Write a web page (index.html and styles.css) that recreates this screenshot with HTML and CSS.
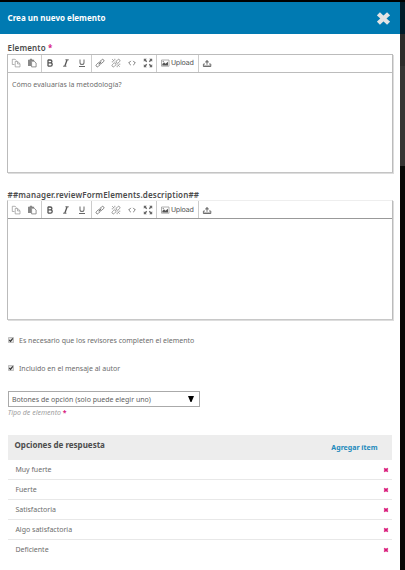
FILE: index.html
```html
<!DOCTYPE html>
<html lang="es">
<head>
<meta charset="utf-8">
<title>Crea un nuevo elemento</title>
<link rel="stylesheet" href="styles.css">
</head>
<body>
<svg class="sprite" aria-hidden="true">
  <symbol id="copy" viewBox="0 0 10 10"><path d="M3.5 6.5h-2.2v-5.2h2.7l1.6 1.4M4.2 3.5h2.5l2.3 2.2v3.2h-4.8zM6.5 3.6v2.3h2.3" fill="none" stroke="#929292" stroke-width=".7"/></symbol>
  <symbol id="paste" viewBox="0 0 10 10"><path d="M1 1.7h1.6l.4-.9h2l.4.9h1.7v1.2h-2.8v5h-3.3z" fill="#888"/><path d="M4.6 3.2h2.5l2 1.8v3.9h-4.5z" fill="#fff" stroke="#777" stroke-width=".8"/></symbol>
  <symbol id="bold" viewBox="0 0 10 10"><path d="M3 1.8v6.5M3 2h2.3q1.6 0 1.6 1.4t-1.6 1.5H3h2.5q1.7 0 1.7 1.6T5.5 8.1H3" fill="none" stroke="#555" stroke-width="1.3"/></symbol>
  <symbol id="italic" viewBox="0 0 10 10"><path d="M4.3 1.8h3.5M2 8.2h3.5" stroke="#666" stroke-width=".9"/><path d="M6.1 1.8L3.8 8.2" stroke="#555" stroke-width="1.3"/></symbol>
  <symbol id="underline" viewBox="0 0 10 10"><path d="M3 1.5v3q0 2 2 2t2-2v-3" fill="none" stroke="#777" stroke-width="1.1"/><path d="M2 8.5h6" stroke="#666"/></symbol>
  <symbol id="link" viewBox="0 0 10 10"><g fill="none" stroke="#777" stroke-width=".9"><rect x="4.6" y="2.1" width="4.6" height="2.6" rx="1.3" transform="rotate(-45 6.9 3.4)"/><rect x=".8" y="5.5" width="4.6" height="2.6" rx="1.3" transform="rotate(-45 3.1 6.8)"/><path d="M3.7 6.3l2.6-2.6"/></g></symbol>
  <symbol id="unlink" viewBox="0 0 10 10"><g fill="none" stroke="#888" stroke-width=".8"><rect x="4.8" y="2" width="4.4" height="2.6" rx="1.3" transform="rotate(-45 7 3.3)"/><rect x=".8" y="5.6" width="4.4" height="2.6" rx="1.3" transform="rotate(-45 3 6.9)"/><path d="M1.2 1.2l2 2M3.8.8v1.6M.8 3.8h1.6M6.7 6.7l2 2M6.2 7.5v1.7M7.5 6.2h1.8"/></g></symbol>
  <symbol id="code" viewBox="0 0 10 10"><path d="M3.8 2.9L1.7 5l2.1 2.1M6.2 2.9L8.3 5 6.2 7.1" fill="none" stroke="#666" stroke-width=".9"/></symbol>
  <symbol id="full" viewBox="0 0 10 10"><path d="M.8.8h3L2.8 1.8l1.4 1.4-1 1-1.4-1.4-1 1zM9.2.8h-3l1 1-1.4 1.4 1 1 1.4-1.4 1 1zM.8 9.2h3l-1-1 1.4-1.4-1-1-1.4 1.4-1-1zM9.2 9.2h-3l1-1-1.4-1.4 1-1 1.4 1.4 1-1z" fill="#666"/></symbol>
  <symbol id="image" viewBox="0 0 10 10"><path d="M1.5 2h7.5v6.2H1.5z" fill="#fff" stroke="#999" stroke-width=".8"/><path d="M2.3 7.5V6l1.7-1.7 1.4 1.5 2.6-2v3.7z" fill="#555"/><circle cx="3.2" cy="3.4" r=".6" fill="#777"/></symbol>
  <symbol id="upload" viewBox="0 0 10 10"><path d="M3 6H1.4v2.5h7.4V6H7M5 6.8V2M3.3 3.9h3.4M1.4 8h7.4" fill="none" stroke="#666" stroke-width=".9"/><path d="M3.2 4.2L5 2.2l1.8 2z" fill="#777"/></symbol>
  <symbol id="times" viewBox="0 0 12 12"><path d="M2.8 3l6.4 6M9.2 3L2.8 9" stroke="currentColor" stroke-width="4" stroke-linecap="square"/></symbol>
  <symbol id="remove" viewBox="0 0 6 6"><path d="M1.2 1.3l3.6 3.4M4.8 1.3L1.2 4.7" stroke="currentColor" stroke-width="1.7"/></symbol>
</svg>
<div class="modal">
  <header class="header"><h1>Crea un nuevo elemento</h1><svg class="close"><use href="#times"/></svg></header>
  <main class="content">
    <div class="label"><span>Elemento</span> <b class="req">*</b></div>
    <section class="editor first">
      <div class="toolbar">
        <div class="group"><svg><use href="#copy"/></svg><svg><use href="#paste"/></svg></div>
        <div class="group"><svg><use href="#bold"/></svg><svg><use href="#italic"/></svg><svg><use href="#underline"/></svg></div>
        <div class="group links"><svg><use href="#link"/></svg><svg><use href="#unlink"/></svg><svg><use href="#code"/></svg><svg><use href="#full"/></svg></div>
        <div class="group upload"><svg><use href="#image"/></svg><span>Upload</span></div>
        <div class="group last"><svg><use href="#upload"/></svg></div>
      </div>
      <p class="text"><span>Cómo evaluarías la metodología?</span></p>
    </section>
    <div class="label second-label"><span>##manager.reviewFormElements.description##</span></div>
    <section class="editor second">
      <div class="toolbar">
        <div class="group"><svg><use href="#copy"/></svg><svg><use href="#paste"/></svg></div>
        <div class="group"><svg><use href="#bold"/></svg><svg><use href="#italic"/></svg><svg><use href="#underline"/></svg></div>
        <div class="group links"><svg><use href="#link"/></svg><svg><use href="#unlink"/></svg><svg><use href="#code"/></svg><svg><use href="#full"/></svg></div>
        <div class="group upload"><svg><use href="#image"/></svg><span>Upload</span></div>
        <div class="group last"><svg><use href="#upload"/></svg></div>
      </div>
    </section>
    <div class="check c1"><svg class="box" viewBox="0 0 6 6"><path d="M.5.5h5v5h-5z" fill="#e0e0e0" stroke="#aaa" stroke-width=".7"/><path d="M1.3 3l1.2 1.3L4.8 1.4" fill="none" stroke="#333" stroke-width="1.2"/></svg><span>Es necesario que los revisores completen el elemento</span></div>
    <div class="check c2"><svg class="box" viewBox="0 0 6 6"><path d="M.5.5h5v5h-5z" fill="#e0e0e0" stroke="#aaa" stroke-width=".7"/><path d="M1.3 3l1.2 1.3L4.8 1.4" fill="none" stroke="#333" stroke-width="1.2"/></svg><span>Incluido en el mensaje al autor</span></div>
    <div class="select"><span>Botones de opción (solo puede elegir uno)</span><svg viewBox="0 0 6 6"><path d="M0 0h6L3.5 6h-1z"/></svg></div>
    <div class="hint"><i>Tipo de elemento</i> <b class="req">*</b></div>
    <section class="options">
      <div class="options-head"><h2>Opciones de respuesta</h2><a>Agregar ítem</a></div>
      <ul>
        <li><span>Muy fuerte</span><svg><use href="#remove"/></svg></li>
        <li><span>Fuerte</span><svg><use href="#remove"/></svg></li>
        <li><span>Satisfactoria</span><svg><use href="#remove"/></svg></li>
        <li><span>Algo satisfactoria</span><svg><use href="#remove"/></svg></li>
        <li><span>Deficiente</span><svg><use href="#remove"/></svg></li>
      </ul>
    </section>
  </main>
</div>
<aside class="backdrop"><div class="b1"></div><div class="b2"></div><div class="b3"></div></aside>
</body>
</html>
```
FILE: styles.css
```css
* { box-sizing: border-box; }
body { margin: 0; width: 405px; height: 570px; overflow: hidden; display: flex; padding-top: 2px; background: #000; font: 7px/10px "Noto Sans", sans-serif; color: #6c6c6c; }
.sprite { position: absolute; width: 0; height: 0; }
svg { display: block; flex: none; }
h1, h2, p, ul { margin: 0; padding: 0; }
.modal { width: 400px; height: 568px; background: #fff; }
.header { height: 32px; background: #007ab2; color: #fff; display: flex; align-items: center; justify-content: space-between; padding: 0 10px 0 7.5px; }
.header h1 { font-size: 8px; line-height: 10px; font-weight: 700; letter-spacing: .02px; }
.close { width: 13px; height: 13px; color: #e4e4e4; margin-top: 1px; }
.content { padding: 8px 7px 0; }
.label { height: 12px; padding-left: .6px; font-size: 8px; line-height: 12px; font-weight: 600; color: #4c4c4c; white-space: nowrap; letter-spacing: .15px; }
.req { color: #d82080; font-weight: 700; }
.editor { width: 386px; border: 1px solid #bbb; box-shadow: 1px 1px 0 #ddd; }
.first { height: 119px; border-bottom-color: #c4c4c4; }
.second { height: 120px; border-top-color: #eee; border-bottom-color: #c8c8c8; }
.toolbar { height: 18px; border-bottom: 1px solid #bcbcbc; display: flex; }
.second .toolbar { border-bottom-color: #999; }
.group { display: flex; align-items: center; gap: 6px; padding: 0 4px 0 3px; width: 34px; border-right: 1px solid #ccc; }
.first .group { padding-bottom: 2px; }
.group svg { width: 10px; height: 10px; }
.group:nth-child(2) { width: 50px; }
.group.links { width: 65px; padding-left: 2.5px; }
.group.upload { width: 42px; gap: 1px; padding-left: 3px; }
.upload span { font: 7px/10px "DejaVu Sans", sans-serif; color: #555; letter-spacing: -.3px; }
.group.last { width: 20px; border: 0; }
.last svg { margin-top: 1px; }
.text { padding: 7px 4px; letter-spacing: .02px; }
.second-label { margin-top: 16px; height: 11px; }
.check { display: flex; align-items: center; height: 10px; gap: 5px; padding-left: 1px; }
.check .box { width: 6px; height: 6px; margin-bottom: 2px; }
.c1 { margin-top: 16px; }
.c2 { margin-top: 18px; }
.select { width: 192px; height: 16px; margin: 17px 0 0 1px; border: 1px solid #aaa; display: flex; align-items: center; justify-content: space-between; padding: 1px 5px 0 3px; color: #606060; }
.select svg { width: 6px; height: 6px; margin-bottom: 1px; }
.hint { padding-left: .7px; color: #a0a0a0; margin-top: 1px; }
.options { margin: 17px 0 0 1px; width: 384px; }
.options-head { height: 25px; background: #ededed; display: flex; justify-content: space-between; padding: 5px 14.5px 0 6.5px; }
.options-head h2 { font-size: 8px; line-height: 10px; color: #4c4c4c; }
.options-head a { color: #2289bc; font-weight: 700; margin-top: 3px; }
ul { list-style: none; }
li { display: flex; justify-content: space-between; align-items: center; height: 20px; border-bottom: 1px solid #e8e8e8; padding: 0 3.4px 0 7.4px; }
li:last-child { border-color: transparent; }
li svg { width: 6px; height: 6px; color: #d81878; }
.backdrop { width: 5px; }
.b1 { height: 32px; background: #001b29; }
.b2 { height: 132px; background: linear-gradient(#2d2b2a 32px, #363433 32px); }
.b3 { height: 404px; background: #080806; }
```
